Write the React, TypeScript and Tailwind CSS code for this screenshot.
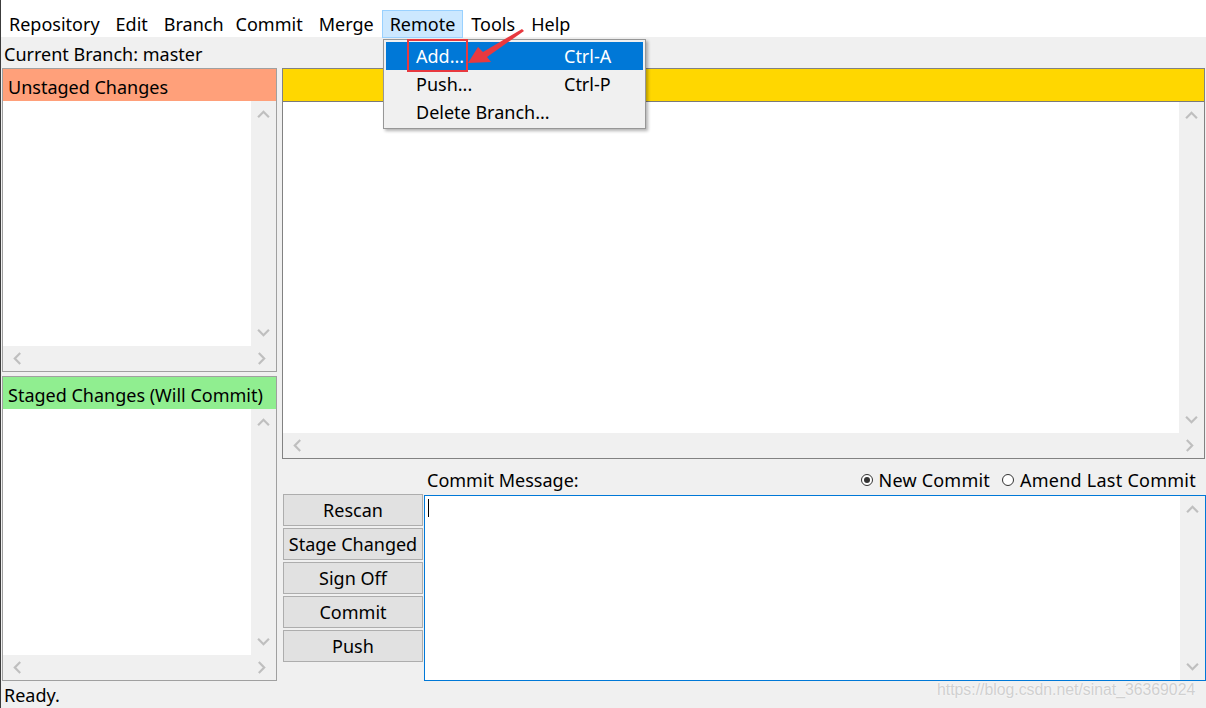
import React from "react";

function Chevron({ dir, className = "" }: { dir: "up" | "down" | "left" | "right"; className?: string }) {
  const rot = dir === "down" ? 0 : dir === "up" ? 180 : dir === "left" ? 90 : 270;
  return (
    <svg width="13" height="13" viewBox="0 0 12 12" className={className} style={{ transform: `rotate(${rot}deg)` }}>
      <path d="M1 3.5 L6 8.5 L11 3.5" fill="none" stroke="#bfbfbf" strokeWidth="2" />
    </svg>
  );
}

function VScroll() {
  return (
    <div className="w-[25px] bg-[#f0f0f0] flex flex-col justify-between items-center py-[7px]">
      <Chevron dir="up" />
      <Chevron dir="down" />
    </div>
  );
}

function HScroll() {
  return (
    <div className="h-[25px] shrink-0 bg-[#f0f0f0] flex justify-between items-center px-[8px]">
      <Chevron dir="left" />
      <Chevron dir="right" />
    </div>
  );
}

function FilePane({ title, headerClass, heightClass }: { title: string; headerClass: string; heightClass: string }) {
  return (
    <div className={`${heightClass} border border-[#a0a0a0] flex flex-col bg-white`}>
      <div className={`h-[32px] shrink-0 flex items-center pl-[5px] pt-[4px] ${headerClass}`}>{title}</div>
      <div className="flex-1 flex min-h-0">
        <div className="flex-1 bg-white" />
        <VScroll />
      </div>
      <HScroll />
    </div>
  );
}

function Btn({ label }: { label: string }) {
  return (
    <div className="w-[140px] h-[32px] bg-[#e1e1e1] border border-[#adadad] flex items-center justify-center">
      {label}
    </div>
  );
}

export default function App() {
  const menus = ["Repository", "Edit", "Branch", "Commit", "Merge", "Remote", "Tools", "Help"];
  return (
    <div className="relative w-[1206px] h-[708px] overflow-hidden bg-[#f0f0f0] border-l border-[#3c3c3c] text-[18px] leading-none text-black font-['Noto_Sans',sans-serif]">
      {/* Menu bar */}
      <div className="h-[37px] bg-white flex items-end">
        {menus.map((m) => (
          <div
            key={m}
            className={
              m === "Remote"
                ? "h-[28px] px-[7px] flex items-center border border-[#99d1ff] bg-[#cce8ff] relative top-[1px]"
                : m === "Branch"
                ? "h-[28px] pl-[7px] pr-[3px] flex items-center border border-transparent relative top-[1px]"
                : "h-[28px] px-[7px] flex items-center border border-transparent relative top-[1px]"
            }
          >
            {m}
          </div>
        ))}
      </div>

      {/* Current branch */}
      <div className="h-[31px] flex items-center pl-[3px] pt-[2px]">Current Branch: master</div>

      {/* Main */}
      <div className="flex h-[613px] pl-[1px]">
        <div className="w-[275px] flex flex-col gap-[4px]">
          <FilePane title="Unstaged Changes" headerClass="bg-[#ffa07a]" heightClass="h-[304px]" />
          <FilePane title="Staged Changes (Will Commit)" headerClass="bg-[#90ee90]" heightClass="h-[305px]" />
        </div>
        <div className="w-[924px] ml-[5px] flex flex-col">
          <div className="h-[391px] mr-[1px] border border-[#828282] flex flex-col bg-white">
            <div className="h-[33px] shrink-0 bg-[#ffd700] border-b border-[#7a7a7a]" />
            <div className="flex-1 flex min-h-0">
              <div className="flex-1 bg-white" />
              <VScroll />
            </div>
            <HScroll />
          </div>
          <div className="flex-1 flex flex-col">
            <div className="h-[35px] flex items-center pr-[10px] pt-[6px]">
              <div className="w-[145px]" />
              <span>Commit Message:</span>
              <div className="ml-auto flex items-center">
                <span className="w-[12px] h-[12px] rounded-full border border-[#333] bg-white flex items-center justify-center">
                  <span className="w-[6px] h-[6px] rounded-full bg-[#333]" />
                </span>
                <span className="ml-[6px] tracking-[0.2px]">New Commit</span>
                <span className="ml-[12px] w-[12px] h-[12px] rounded-full border border-[#333] bg-white" />
                <span className="ml-[6px] tracking-[0.25px]">Amend Last Commit</span>
              </div>
            </div>
            <div className="flex flex-1 pl-[1px]">
              <div className="flex flex-col gap-[2px]">
                <Btn label="Rescan" />
                <Btn label="Stage Changed" />
                <Btn label="Sign Off" />
                <Btn label="Commit" />
                <Btn label="Push" />
              </div>
              <div className="ml-[1px] mt-[1px] w-[782px] h-[186px] border border-[#0078d7] bg-white flex">
                <div className="flex-1 pl-[3px] pt-[3px]">
                  <div className="w-[1px] h-[18px] bg-black" />
                </div>
                <VScroll />
              </div>
            </div>
          </div>
        </div>
      </div>

      {/* Status bar */}
      <div className="h-[27px] flex items-center pl-[3px]">Ready.</div>

      {/* Watermark */}
      <div className="absolute left-[936px] top-[682px] text-[15.8px] leading-none text-[#d0d0d0] font-['Liberation_Sans',Arial,sans-serif] [text-shadow:0_0_2px_#ffffff]">
        https://blog.csdn.net/sinat_36369024
      </div>

      {/* Dropdown menu */}
      <div className="absolute left-[382px] top-[39px] w-[263px] h-[90px] bg-[#f0f0f0] border border-[#979797] shadow-[2px_2px_3px_rgba(0,0,0,0.3)] p-[2px]">
        <div className="h-[28px] flex items-center pl-[30px] bg-[#0078d7] text-white">
          <span className="w-[148px]">Add...</span>
          <span>Ctrl-A</span>
        </div>
        <div className="h-[28px] flex items-center pl-[30px]">
          <span className="w-[148px]">Push...</span>
          <span>Ctrl-P</span>
        </div>
        <div className="h-[28px] flex items-center pl-[30px]">
          <span>Delete Branch...</span>
        </div>
      </div>

      {/* Annotation */}
      <div className="absolute left-[406px] top-[39px] w-[61px] h-[33px] border-2 border-[#e8393f]" />
      <svg className="absolute left-[459px] top-[25px]" width="72" height="45" viewBox="460 25 72 45">
        <polygon points="468,63 478,47 483,52 522,29 524,31 487,57 491,62" fill="#e8393f" />
      </svg>
    </div>
  );
}
